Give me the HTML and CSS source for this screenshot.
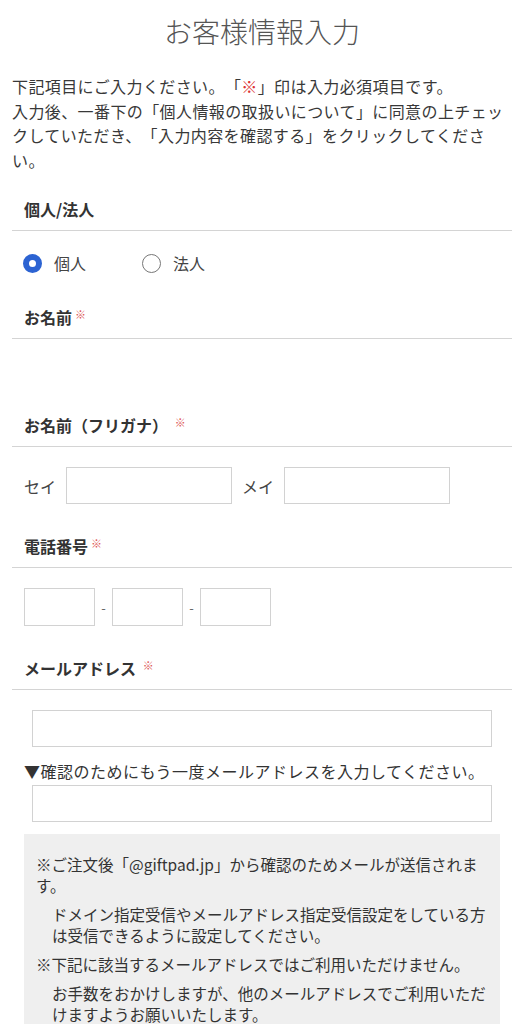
FILE: index.html
```
<!DOCTYPE html>
<html lang="ja">
<head>
<meta charset="utf-8">
<title>お客様情報入力</title>
<link rel="stylesheet" href="styles.css">
</head>
<body>
<div class="page">
  <h1 class="title">お客様情報入力</h1>
  <p class="intro">下記項目にご入力ください。「<span class="req-inline">※</span>」印は入力必須項目です。<br>入力後、一番下の「個人情報の取扱いについて」に同意の上チェックしていただき、「入力内容を確認する」をクリックしてください。</p>

  <div class="section-head">個人/法人</div>
  <div class="field-body radio-row">
    <label class="radio-item"><span class="radio checked"></span><span class="radio-label">個人</span></label>
    <label class="radio-item"><span class="radio"></span><span class="radio-label">法人</span></label>
  </div>

  <div class="section-head">お名前<span class="req">※</span></div>
  <div class="field-body empty-body"></div>

  <div class="section-head">お名前（フリガナ） <span class="req">※</span></div>
  <div class="field-body kana-row">
    <span class="kana-label">セイ</span>
    <span class="input kana-input"></span>
    <span class="kana-label">メイ</span>
    <span class="input kana-input"></span>
  </div>

  <div class="section-head">電話番号<span class="req">※</span></div>
  <div class="field-body tel-row">
    <span class="input tel-input"></span>
    <span class="dash">-</span>
    <span class="input tel-input"></span>
    <span class="dash">-</span>
    <span class="input tel-input"></span>
  </div>

  <div class="section-head">メールアドレス <span class="req">※</span></div>
  <div class="field-body mail-body">
    <span class="input mail-input"></span>
    <p class="mail-confirm">▼確認のためにもう一度メールアドレスを入力してください。</p>
    <span class="input mail-input mail-input2"></span>
    <div class="notice">
      <p>※ご注文後「@giftpad.jp」から確認のためメールが送信されます。</p>
      <p class="indent">ドメイン指定受信やメールアドレス指定受信設定をしている方は受信できるように設定してください。</p>
      <p>※下記に該当するメールアドレスではご利用いただけません。</p>
      <p class="indent">お手数をおかけしますが、他のメールアドレスでご利用いただけますようお願いいたします。</p>
    </div>
  </div>
</div>
</body>
</html>
```
FILE: styles.css
```
* { box-sizing: border-box; }
html, body {
  margin: 0;
  padding: 0;
  background: #fff;
}
body {
  font-family: "Noto Sans CJK JP", "Noto Sans", sans-serif;
  color: #333;
  font-size: 16px;
  text-spacing-trim: space-all;
}
.page {
  width: 524px;
  padding: 0 12px;
}
.title {
  margin: 12px 0 23px;
  font-size: 28px;
  line-height: 39px;
  font-weight: 300;
  color: #555;
  text-align: center;
  width: 500px;
}
.intro {
  margin: 0;
  width: 500px;
  font-size: 16px;
  line-height: 24.5px;
  letter-spacing: 0.4px;
  color: #383838;
}
.req-inline { color: #d33; }
.section-head {
  width: 500px;
  height: 34px;
  margin-top: 30px;
  padding: 0 0 9px 12px;
  font-size: 16px;
  line-height: 24px;
  font-weight: 700;
  color: #333;
  border-bottom: 1px solid #d4d4d4;
}
.intro + .section-head { margin-top: 25px; }
.req {
  font-size: 11px;
  line-height: 0;
  font-weight: 400;
  color: #d55;
  margin-left: 3px;
  vertical-align: 5px;
}
.field-body {
  margin-top: 20px;
  padding-left: 12px;
}
.radio-row {
  display: flex;
  align-items: center;
  height: 24px;
}
.radio-item {
  display: flex;
  align-items: center;
  margin-right: 57px;
}
.radio {
  width: 19px;
  height: 19px;
  border-radius: 50%;
  border: 1.5px solid #777;
  margin-left: -1px;
  display: inline-block;
}
.radio.checked {
  border: 6px solid #2c63d2;
  background: #fff;
}
.radio-label {
  margin-left: 12px;
  font-size: 16px;
  line-height: 24px;
  color: #444;
}
.empty-body { height: 24px; }
.kana-row {
  display: flex;
  align-items: center;
}
.kana-label {
  font-size: 16px;
  line-height: 24px;
  color: #444;
  margin-right: 10px;
}
.input {
  display: block;
  height: 37px;
  border: 1px solid #d2d2d2;
  background: #fff;
}
.kana-input {
  width: 166px;
  margin-right: 10px;
}
.tel-row {
  display: flex;
  align-items: center;
}
.tel-input {
  width: 71px;
  height: 38px;
}
.dash {
  width: 17px;
  text-align: center;
  font-size: 13px;
  color: #666;
}
.mail-body {
  width: 500px;
  padding: 0 12px;
}
.mail-input {
  margin: 0 8px;
  width: calc(100% - 16px);
}
.mail-confirm {
  margin: 12px 0 2px;
  font-size: 16px;
  line-height: 24px;
  letter-spacing: 0.5px;
  color: #333;
  white-space: nowrap;
}
.notice {
  margin-top: 12px;
  background: #efefef;
  padding: 20px 8px 20px 12px;
}
.notice p {
  margin: 0 0 8px;
  font-size: 15.5px;
  line-height: 21px;
  color: #333;
}
.notice p.indent { margin-left: 16px; }
```
